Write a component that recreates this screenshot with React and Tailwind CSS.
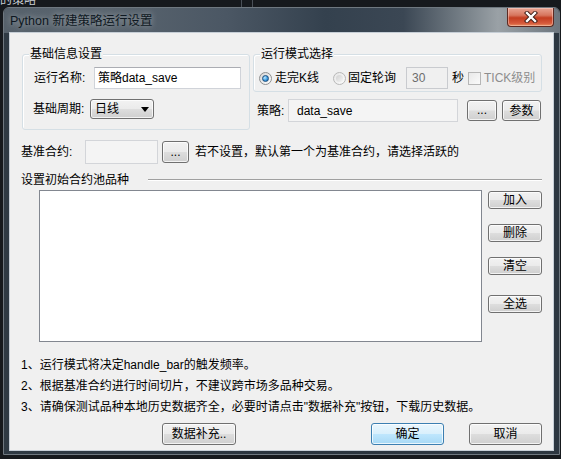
import React from 'react';

const grayBtn =
  'border-[#707070] bg-[linear-gradient(to_bottom,#f2f2f2_0%,#ebebeb_48%,#dddddd_52%,#cfcfcf_100%)]';
const blueBtn =
  'border-[#3c7fb1] bg-[linear-gradient(to_bottom,#eaf6fd_0%,#d9f0fc_48%,#bee6fd_52%,#a7d9f5_100%)]';

function Button({ children, primary, className = '' }) {
  return (
    <button
      type="button"
      className={`flex shrink-0 items-center justify-center rounded-[3px] border text-[12px] leading-[14px] text-black shadow-[inset_0_0_0_1px_rgba(255,255,255,0.75)] ${primary ? blueBtn : grayBtn} ${className}`}
    >
      {children}
    </button>
  );
}

function GroupBox({ title, className = '', children }) {
  return (
    <div className={`relative rounded-[3px] border border-[#d5dfe5] shadow-[inset_1px_1px_0_#ffffff] ${className}`}>
      <span className="absolute -top-[8px] left-[6px] bg-[#f0f0f0] px-[1px] leading-[14px]">{title}</span>
      {children}
    </div>
  );
}

function Radio({ checked, disabled }) {
  return (
    <span
      className={`flex h-[13px] w-[13px] shrink-0 items-center justify-center rounded-full border ${
        disabled
          ? 'border-[#b8b8b8] bg-[linear-gradient(135deg,#e6e6e6,#fbfbfb)]'
          : 'border-[#8e8f8f] bg-[linear-gradient(135deg,#d5d5d5,#ffffff)]'
      }`}
    >
      {checked ? (
        <span className="h-[7px] w-[7px] rounded-full border border-[#1d4f7d] bg-[radial-gradient(circle_at_35%_35%,#bfeaff_0%,#3c9ae0_55%,#135c9e_100%)]" />
      ) : (
        <span className="h-[7px] w-[7px] rounded-full bg-[linear-gradient(135deg,#d0d0d0,#f4f4f4)]" />
      )}
    </span>
  );
}

function CloseButton() {
  return (
    <div className="mr-[5px] flex h-[19px] w-[47px] items-center justify-center rounded-b-[4px] border border-t-0 border-[#5c2a22] bg-[linear-gradient(to_bottom,#e8a493_0%,#d7765f_40%,#c33d21_55%,#d65a3c_85%,#e9905f_100%)] shadow-[inset_0_0_0_1px_rgba(255,220,210,0.45)]">
      <svg width="14" height="12" viewBox="0 0 14 12">
        <path d="M3 2 L11 10 M11 2 L3 10" stroke="#3b1a14" strokeWidth="4.2" strokeLinecap="square" />
        <path d="M3 2 L11 10 M11 2 L3 10" stroke="#ffffff" strokeWidth="2.4" strokeLinecap="square" />
      </svg>
    </div>
  );
}

export default function App() {
  return (
    <div className="relative h-[459px] w-[561px] overflow-hidden bg-[#16191d] font-['Liberation_Sans','Noto_Sans_CJK_SC',sans-serif]">
      {/* desktop behind the dialog */}
      <span className="absolute -top-[7px] left-0 text-[12px] leading-[14px] text-[#c9ced3]">的策略</span>
      <span className="absolute left-[241px] top-0 h-[7px] w-px bg-[#4a5058]" />
      <span className="absolute left-[252px] top-0 h-[7px] w-px bg-[#4a5058]" />

      {/* dialog window */}
      <div className="absolute left-[3px] top-[7px] flex h-[448px] w-[557px] flex-col rounded-t-[6px] border border-[#6f7880] bg-[linear-gradient(to_right,#2f3a44,#2a343e_50%,#2c3640)]">
        <div className="flex h-[25px] items-start justify-between rounded-t-[5px] bg-[linear-gradient(to_right,#56616b_0%,#5a656f_18%,#4b5764_40%,#34414e_58%,#3b4754_72%,#7d868d_84%,#9aa1a6_89%,#6d767e_100%)]">
          <span className="ml-[6px] mt-[6px] text-[12.5px] leading-[14px] text-[#0e1822] [text-shadow:0_0_6px_rgba(255,255,255,0.55)]">
            Python 新建策略运行设置
          </span>
          <CloseButton />
        </div>

        <div className="ml-[6px] flex h-[417px] w-[543px] flex-col bg-[#f0f0f0] text-[12px] leading-[14px] text-black shadow-[0_0_0_1px_#c6ced6]">
          {/* top group boxes */}
          <div className="mt-[21px] flex">
            <GroupBox title="基础信息设置" className="ml-[12px] h-[76px] w-[228px]">
              <div className="mt-[12px] flex h-[22px] items-center">
                <span className="ml-[11px] w-[60px]">运行名称:</span>
                <div className="flex h-[22px] w-[147px] items-center border border-[#d0d3d9] border-t-[#abadb3] bg-white pl-[3px]">
                  策略data_save
                </div>
              </div>
              <div className="mt-[10px] flex h-[20px] items-center">
                <span className="ml-[10px] w-[57px]">基础周期:</span>
                <div className={`flex h-[20px] w-[64px] items-center justify-between rounded-[3px] border pl-[4px] pr-[4px] shadow-[inset_0_0_0_1px_rgba(255,255,255,0.75)] ${grayBtn}`}>
                  <span>日线</span>
                  <svg width="8" height="5" viewBox="0 0 8 5">
                    <path d="M0 0 H8 L4 5 Z" fill="#000000" />
                  </svg>
                </div>
              </div>
            </GroupBox>

            <div className="ml-[3px] flex w-[289px] flex-col">
              <GroupBox title="运行模式选择" className="h-[38px]">
                <div className="mt-[12px] flex h-[22px] items-center">
                  <span className="ml-[5px]">
                    <Radio checked />
                  </span>
                  <span className="ml-[3px] w-[58px]">走完K线</span>
                  <Radio disabled />
                  <span className="ml-[2px] w-[58px]">固定轮询</span>
                  <div className="flex h-[22px] w-[42px] items-center border border-[#c9cbcf] bg-[#f0f0f0] pl-[5px] text-[#6d6d6d]">
                    30
                  </div>
                  <span className="ml-[4px]">秒</span>
                  <span className="ml-[4px] h-[13px] w-[13px] border border-[#b6b6b6] bg-[linear-gradient(135deg,#e8e8e8,#fafafa)]" />
                  <span className="ml-[3px] text-[#8d8d8d]">TICK级别</span>
                </div>
              </GroupBox>
              <div className="mt-[7px] flex h-[23px] items-center">
                <span className="ml-[4px] w-[31px]">策略:</span>
                <div className="flex h-[23px] w-[170px] items-center border border-[#d3d5d9] bg-[#f4f4f4] pl-[8px]">
                  data_save
                </div>
                <Button className="ml-[9px] h-[21px] w-[30px] items-end pb-[3px]">...</Button>
                <Button className="ml-[5px] h-[21px] w-[39px]">参数</Button>
              </div>
            </div>
          </div>

          {/* base contract */}
          <div className="mt-[10px] flex h-[24px] items-center">
            <span className="ml-[11px] w-[64px]">基准合约:</span>
            <div className="h-[24px] w-[73px] border border-[#d3d5d9] bg-[#f4f4f4]" />
            <Button className="ml-[4px] h-[22px] w-[27px] items-end pb-[3px]">...</Button>
            <span className="ml-[6px]">若不设置，默认第一个为基准合约，请选择活跃的</span>
          </div>

          {/* pool title */}
          <div className="mt-[9px] flex h-[14px] items-center">
            <span className="ml-[11px]">设置初始合约池品种</span>
            <div className="ml-[19px] mr-[11px] h-[2px] flex-1 border-t border-b border-t-[#a0a0a0] border-b-white" />
          </div>

          {/* list + actions */}
          <div className="mt-[3px] flex">
            <div className="ml-[29px] h-[152px] w-[443px] border border-[#828790] bg-white" />
            <div className="ml-[6px] flex w-[54px] flex-col">
              <Button className="mt-[1px] h-[18px] w-[54px]">加入</Button>
              <Button className="mt-[15px] h-[18px] w-[54px]">删除</Button>
              <Button className="mt-[15px] h-[18px] w-[54px]">清空</Button>
              <Button className="mt-[20px] h-[18px] w-[54px]">全选</Button>
            </div>
          </div>

          {/* notes */}
          <div className="ml-[11px] mt-[13px] flex flex-col leading-[21px]">
            <span>1、运行模式将决定handle_bar的触发频率。</span>
            <span>2、根据基准合约进行时间切片，不建议跨市场多品种交易。</span>
            <span>3、请确保测试品种本地历史数据齐全，必要时请点击"数据补充"按钮，下载历史数据。</span>
          </div>

          {/* footer buttons */}
          <div className="mt-[5px] flex h-[22px]">
            <Button className="ml-[152px] h-[22px] w-[74px]">数据补充..</Button>
            <Button primary className="ml-[135px] h-[22px] w-[73px]">确定</Button>
            <Button className="ml-[25px] h-[22px] w-[73px]">取消</Button>
          </div>
        </div>
      </div>
    </div>
  );
}
